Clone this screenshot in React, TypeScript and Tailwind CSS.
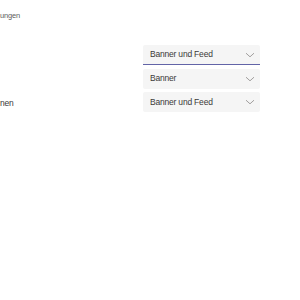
const rows = [
  { label: '', value: 'Banner und Feed', active: true },
  { label: '', value: 'Banner', active: false },
  { label: 'nen', value: 'Banner und Feed', active: false },
];

function Chevron() {
  return (
    <svg width="10" height="6" viewBox="0 0 10 6" fill="none">
      <path d="M1 1.2 L5 4.8 L9 1.2" stroke="#8a8886" strokeWidth="0.8" />
    </svg>
  );
}

function Select({ value, active }: { value: string; active: boolean }) {
  return (
    <div
      className={`h-[20px] flex items-center justify-between pl-[7px] pr-[5px] bg-[#f5f5f5] rounded-[2px] ${
        active ? 'border-b-[1.5px] border-[#6264a7] rounded-b-none' : ''
      }`}
    >
      <span className="text-[8.5px] tracking-[-0.2px] text-[#3b3a39] leading-none">{value}</span>
      <Chevron />
    </div>
  );
}

export default function App() {
  return (
    <div
      className="w-[300px] h-[300px] bg-white overflow-hidden"
      style={{ fontFamily: '"Liberation Sans", Arial, sans-serif' }}
    >
      <p className="pt-[11px] text-[7.5px] tracking-[-0.2px] leading-[10px] text-[#605e5c]">ungen</p>
      <div className="mt-[24px] grid grid-cols-[143px_117px] gap-y-[3.5px]">
        {rows.map((r, i) => (
          <div key={i} className="contents">
            <div className="flex items-center pt-[3px] text-[8.5px] tracking-[-0.2px] text-[#3b3a39]">{r.label}</div>
            <Select value={r.value} active={r.active} />
          </div>
        ))}
      </div>
    </div>
  );
}
